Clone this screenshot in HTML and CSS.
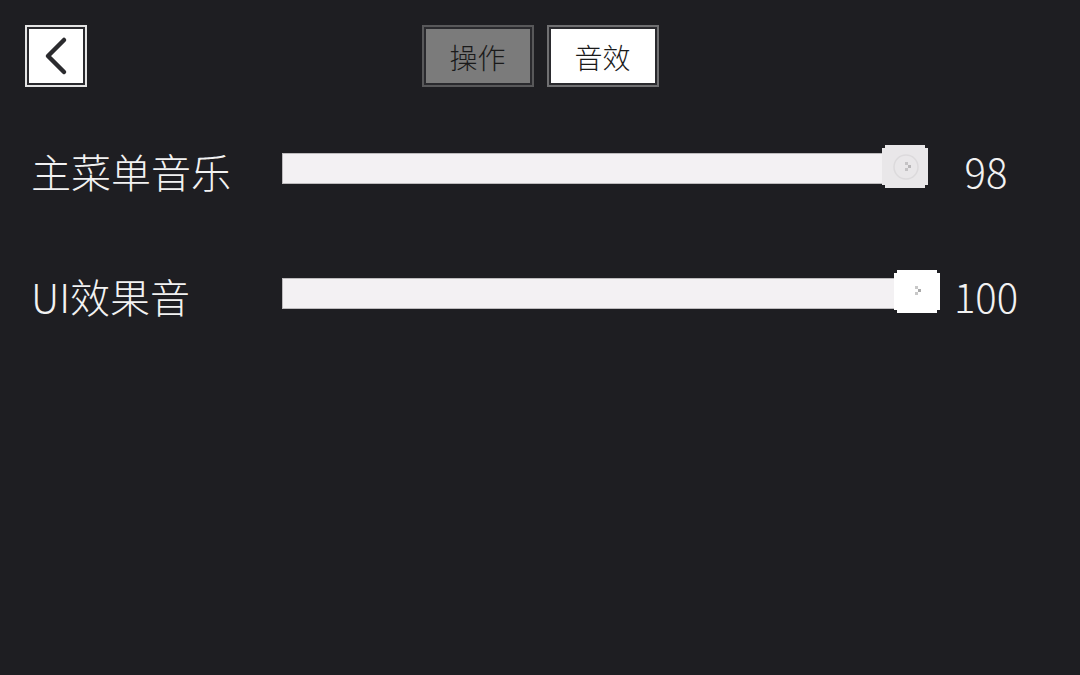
FILE: index.html
```html
<!DOCTYPE html>
<html lang="zh-CN">
<head>
    <meta charset="UTF-8">
    <meta name="viewport" content="width=device-width, initial-scale=1.0">
    <title>设置</title>
    <link rel="stylesheet" href="styles.css">
</head>
<body>
    <div class="screen">
        <div class="topbar">
            <button class="back-btn" aria-label="返回">
                <svg width="58" height="58" viewBox="0 0 58 58">
                    <polyline points="37,13 21,29 37,45" fill="none" stroke="#2b2b2e" stroke-width="4.5" stroke-linecap="round" stroke-linejoin="round"/>
                </svg>
            </button>
            <div class="tabs">
                <button class="tab">操作</button>
                <button class="tab active">音效</button>
            </div>
        </div>

        <div class="settings">
            <div class="setting-row">
                <span class="label">主菜单音乐</span>
                <div class="slider">
                    <div class="fill" style="width: 610px;"></div>
                    <div class="thumb dim" style="left: 600px;">
                        <svg width="42" height="39" viewBox="0 0 42 39">
                            <circle cx="22" cy="20" r="12" fill="none" stroke="#dcdadc" stroke-width="1.5"/>
                            <rect x="21" y="15" width="3" height="3" fill="#c4c2c4"/>
                            <rect x="24" y="18" width="3" height="3" fill="#b8b6b8"/>
                            <rect x="21" y="21" width="3" height="3" fill="#c4c2c4"/>
                        </svg>
                    </div>
                </div>
                <span class="value">98</span>
            </div>

            <div class="setting-row">
                <span class="label">UI效果音</span>
                <div class="slider">
                    <div class="fill" style="width: 620px;"></div>
                    <div class="thumb" style="left: 612px;">
                        <svg width="42" height="39" viewBox="0 0 42 39">
                            <rect x="19" y="14" width="3" height="3" fill="#c8c8c8"/>
                            <rect x="22" y="17" width="3" height="3" fill="#aaa"/>
                            <rect x="19" y="20" width="3" height="3" fill="#c8c8c8"/>
                        </svg>
                    </div>
                </div>
                <span class="value">100</span>
            </div>
        </div>
    </div>
</body>
</html>
```

FILE: styles.css
```css
body {
    margin: 0;
    padding: 0;
    background-color: #1e1e22;
    font-family: "Noto Sans CJK SC", "Noto Sans", sans-serif;
    color: #f2f2f2;
}
.screen {
    width: 1080px;
    height: 675px;
    overflow: hidden;
}
.topbar {
    display: grid;
    grid-template-columns: 1fr auto 1fr;
    align-items: start;
    padding: 25px 25px 0;
}
.back-btn {
    width: 62px;
    height: 62px;
    padding: 0;
    background: #ffffff;
    border: 2px solid #e4e4e4;
    box-shadow: inset 0 0 0 2px #2a2a2e;
    display: flex;
    align-items: center;
    justify-content: center;
    cursor: pointer;
}
.tabs {
    display: flex;
    gap: 13px;
}
.tab {
    width: 112px;
    height: 62px;
    padding: 2px 0 0;
    border: 2px solid #58585a;
    box-shadow: inset 0 0 0 2px #2a2a2e;
    background: #7b7b7b;
    color: #1a1a1a;
    font-family: "Noto Sans CJK SC", sans-serif;
    font-size: 28px;
    font-weight: 300;
    cursor: pointer;
}
.tab.active {
    background: #ffffff;
    border-color: #707072;
}
.settings {
    display: flex;
    flex-direction: column;
    gap: 79px;
    margin-top: 55px;
    padding-left: 33px;
}
.setting-row {
    display: grid;
    grid-template-columns: 249px 658px 92px;
    align-items: center;
    height: 46px;
}
.label {
    font-size: 40px;
    font-weight: 300;
    line-height: 46px;
    margin-left: -2px;
    padding-top: 6px;
}
.value {
    font-size: 40px;
    font-weight: 300;
    text-align: center;
    line-height: 46px;
    padding-top: 6px;
}
.slider {
    position: relative;
    height: 46px;
    display: flex;
    align-items: center;
}
.fill {
    height: 31px;
    background: #f3f1f3;
    border: 1px solid #bdbbbd;
    box-sizing: border-box;
}
.thumb {
    position: absolute;
    top: 0;
    width: 46px;
    height: 43px;
    background: #ffffff;
    display: flex;
    align-items: center;
    justify-content: center;
    clip-path: polygon(3px 0, calc(100% - 3px) 0, calc(100% - 3px) 3px, 100% 3px, 100% calc(100% - 3px), calc(100% - 3px) calc(100% - 3px), calc(100% - 3px) 100%, 3px 100%, 3px calc(100% - 3px), 0 calc(100% - 3px), 0 3px, 3px 3px);
}
.thumb.dim {
    background: #e9e7e9;
}
```
